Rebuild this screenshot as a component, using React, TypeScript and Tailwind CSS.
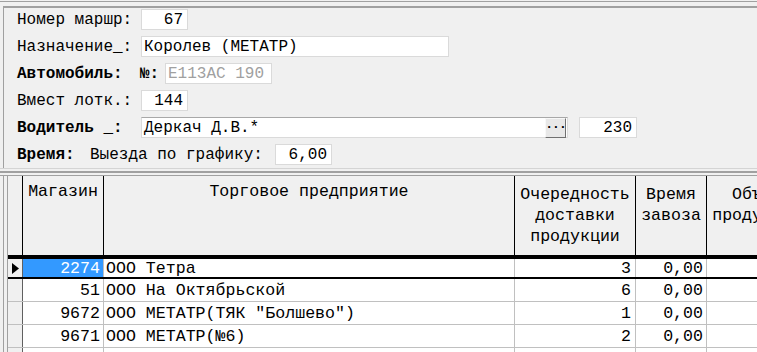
import React from 'react';

type Row = { shop: string; name: string; order: string; time: string; sel?: boolean };

const rows: Row[] = [
    { shop: '2274', name: 'ООО Тетра', order: '3', time: '0,00', sel: true },
    { shop: '51', name: 'ООО На Октябрьской', order: '6', time: '0,00' },
    { shop: '9672', name: 'ООО МЕТАТР(ТЯК "Болшево")', order: '1', time: '0,00' },
    { shop: '9671', name: 'ООО МЕТАТР(№6)', order: '2', time: '0,00' },
    { shop: '', name: '', order: '', time: '' },
];

function Box({ value, className = '', right = false, disabled = false }: { value: string; className?: string; right?: boolean; disabled?: boolean }) {
    return (
        <div
            className={`h-[21px] bg-white border border-[#dadada] flex items-center overflow-hidden whitespace-nowrap ${right ? 'justify-end pr-[4px]' : 'pl-[2px]'} ${disabled ? 'text-[#a0a0a0]' : 'text-black'} ${className}`}
        >
            {value}
        </div>
    );
}

export default function App() {
    return (
        <div className="w-[757px] h-[352px] overflow-hidden bg-[#f0f0f0] text-black font-['Liberation_Mono',monospace] text-[16px] leading-none">
            <div className="mt-[1px] h-[1px] bg-[#a0a0a0]" />
            <div className="mt-[4px] ml-[3px] h-[162px] border-t-2 border-l border-[#a0a0a0]">
                <div className="flex flex-col gap-[6px] pt-[1px] pl-[13px]">
                    <div className="flex items-center h-[21px]">
                        <span className="w-[124px]">Номер маршр:</span>
                        <Box value="67" right className="w-[47px]" />
                    </div>
                    <div className="flex items-center h-[21px]">
                        <span className="w-[124px]">Назначение_:</span>
                        <Box value="Королев (МЕТАТР)" className="w-[308px]" />
                    </div>
                    <div className="flex items-center h-[21px]">
                        <span className="w-[123px] font-bold">Автомобиль:</span>
                        <span className="w-[20px] font-bold">№:</span>
                        <Box value="Е113АС 190" disabled className="ml-[5px] w-[107px]" />
                    </div>
                    <div className="flex items-center h-[21px]">
                        <span className="w-[124px]">Вмест лотк.:</span>
                        <Box value="144" right className="w-[47px]" />
                    </div>
                    <div className="flex items-center h-[21px]">
                        <span className="w-[124px] font-bold">Водитель _:</span>
                        <div className="w-[427px] h-[21px] bg-white border border-[#dadada] border-t-[#a8a8a8] flex items-center">
                            <span className="flex-1 pl-[2px] whitespace-nowrap">Деркач Д.В.*</span>
                            <div className="w-[21px] h-[20px] mr-[1px] bg-[#e8e8e8] border border-[#f8f8f8] border-r-[#707070] border-b-[#707070] flex items-center justify-center font-bold text-[13px] tracking-[-1px]">
                                ···
                            </div>
                        </div>
                        <Box value="230" right className="ml-[11px] w-[58px]" />
                    </div>
                    <div className="flex items-center h-[21px]">
                        <span className="w-[73px] font-bold">Время:</span>
                        <span className="w-[185px] whitespace-nowrap">Выезда по графику:</span>
                        <Box value="6,00" right className="w-[57px]" />
                    </div>
                </div>
            </div>
            <div className="h-[1px] bg-[#d4d4d4]" />
            <div className="mt-[2px] h-[2px] bg-[#a0a0a0]" />
            <div className="mt-[2px] h-[1px] bg-[#a0a0a0]" />
            <div className="ml-[3px] border-l border-[#a0a0a0] pl-[3px] h-[200px] text-[16.6px]">
                <div className="border-l border-[#a0a0a0]">
                    <div className="flex h-[81px] border-b-2 border-black bg-[#f0f0f0]">
                        <div className="w-[15px] shrink-0 border-r border-black" />
                        <div className="w-[81px] shrink-0 border-r border-black text-center pt-[8px]">Магазин</div>
                        <div className="w-[411px] shrink-0 border-r border-black text-center pt-[8px]">Торговое предприятие</div>
                        <div className="w-[121px] shrink-0 border-r border-black text-center pt-[8px] leading-[21px]">
                            Очередность<br />доставки<br />продукции
                        </div>
                        <div className="w-[71px] shrink-0 border-r border-black text-center pt-[8px] leading-[21px]">
                            Время<br />завоза
                        </div>
                        <div className="w-[100px] shrink-0 text-center pt-[8px] leading-[21px] whitespace-nowrap">
                            Объем<br />продукции
                        </div>
                    </div>
                    {rows.map((r, i) => (
                        <div
                            key={i}
                            className={`flex ${r.sel ? 'h-[22px] border-t-2 border-b-2 border-black' : 'h-[23px] border-b border-[#c0c0c0]'}`}
                        >
                            <div className="w-[15px] shrink-0 border-r border-[#606060] bg-[#f0f0f0] flex items-center justify-center">
                                {r.sel && (
                                    <svg width="7" height="11" viewBox="0 0 7 11">
                                        <path d="M0 0 L7 5.5 L0 11 Z" fill="#000" />
                                    </svg>
                                )}
                            </div>
                            <div className={`w-[81px] shrink-0 border-r border-[#c0c0c0] flex items-center justify-end pr-[3px] pt-[2px] ${r.sel ? 'bg-[#3399ff] text-white' : 'bg-white'}`}>
                                {r.shop}
                            </div>
                            <div className="w-[411px] shrink-0 border-r border-[#c0c0c0] bg-white flex items-center pl-[2px] pt-[2px] whitespace-nowrap">
                                {r.name}
                            </div>
                            <div className="w-[121px] shrink-0 border-r border-[#c0c0c0] bg-white flex items-center justify-end pr-[4px] pt-[2px]">
                                {r.order}
                            </div>
                            <div className="w-[71px] shrink-0 border-r border-[#c0c0c0] bg-white flex items-center justify-end pr-[3px] pt-[2px]">
                                {r.time}
                            </div>
                            <div className="w-[100px] shrink-0 bg-white" />
                        </div>
                    ))}
                </div>
            </div>
        </div>
    );
}
